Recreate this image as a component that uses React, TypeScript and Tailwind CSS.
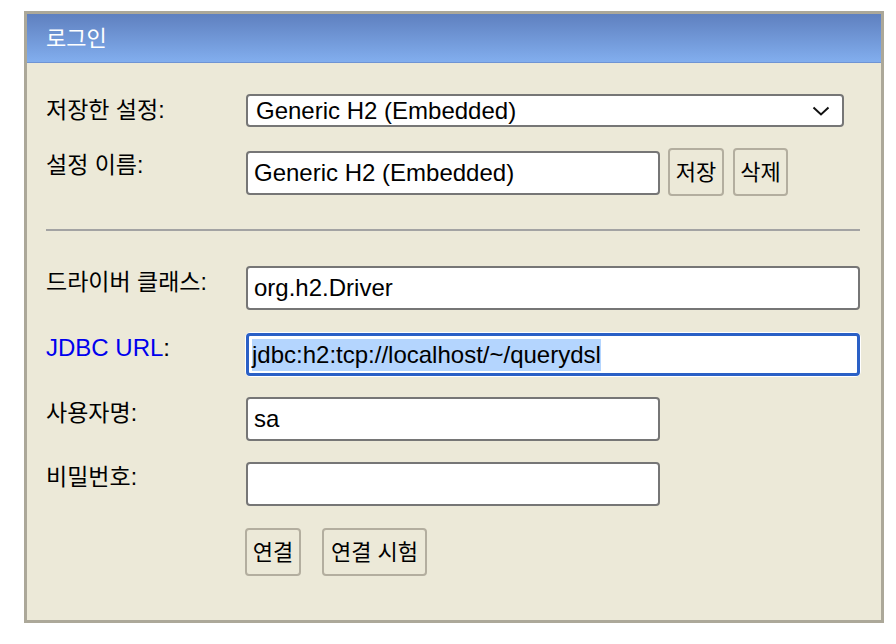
import React from "react";

const font = "font-['Liberation_Sans','Noto_Sans_CJK_KR',sans-serif]";

function Label({ children, pt = "pt-[3px]" }: { children: React.ReactNode; pt?: string }) {
  return (
    <div className={`w-[200px] shrink-0 text-[23px] leading-[28px] text-black ${pt}`}>{children}</div>
  );
}

function TextBox({ value, width }: { value: string; width: string }) {
  return (
    <input
      readOnly
      defaultValue={value}
      className={`${width} h-[44px] rounded-[4px] border-2 border-[#767676] bg-white px-[6px] text-[24px] text-black outline-none ${font}`}
    />
  );
}

function Btn({ children, width }: { children: React.ReactNode; width: string }) {
  return (
    <button
      className={`${width} h-[48px] rounded-[4px] border-2 border-[#b3ae9f] bg-[#ece9d8] text-[22px] text-black ${font}`}
    >
      {children}
    </button>
  );
}

export default function App() {
  return (
    <div className={`min-h-[644px] w-[896px] bg-white pt-[11px] pl-[24px] ${font}`}>
      <div className="w-[860px] border-[3px] border-[#aca899] bg-[#ece9d8]">
        <div className="flex h-[49px] items-center border-b border-[#6f94d4] bg-gradient-to-b from-[#5f80bf] to-[#82aeee] pl-[19px]">
          <span className="text-[22px] text-white">로그인</span>
        </div>

        <div className="pl-[19px] pb-[44px]">
          {/* saved settings */}
          <div className="mt-[31px] flex h-[33px] items-start">
            <Label pt="pt-[2px]">저장한 설정:</Label>
            <div className="flex h-[33px] w-[598px] items-center justify-between rounded-[4px] border-2 border-[#767676] bg-white pl-[8px] pr-[12px] text-[24px] text-black">
              <span>Generic H2 (Embedded)</span>
              <svg width="18" height="12" viewBox="0 0 18 12" fill="none">
                <path d="M1.5 2.5 L9 9.5 L16.5 2.5" stroke="#111" strokeWidth="2" />
              </svg>
            </div>
          </div>

          {/* setting name */}
          <div className="mt-[21px] flex h-[48px] items-start">
            <Label pt="pt-[3px]">설정 이름:</Label>
            <div className="flex items-center">
              <div className="mt-[1px]">
                <TextBox value="Generic H2 (Embedded)" width="w-[414px]" />
              </div>
              <div className="ml-[8px]">
                <Btn width="w-[56px]">저장</Btn>
              </div>
              <div className="ml-[9px]">
                <Btn width="w-[55px]">삭제</Btn>
              </div>
            </div>
          </div>

          <div className="mt-[33px] mr-[21px] h-[2px] bg-[#a3a3a3]" />

          {/* driver class */}
          <div className="mt-[35px] flex h-[44px] items-start">
            <Label pt="pt-[2px]">드라이버 클래스:</Label>
            <TextBox value="org.h2.Driver" width="w-[614px]" />
          </div>

          {/* jdbc url */}
          <div className="mt-[22px] flex h-[43px] items-start">
            <div className="w-[200px] shrink-0 pt-[2px] text-[24px] leading-[28px]">
              <span className="text-[#0000ee]">JDBC URL</span>
              <span className="text-black">:</span>
            </div>
            <div className="-ml-[1px] rounded-[6px] bg-white p-[1px]">
              <div className="flex h-[43px] w-[614px] items-center rounded-[4px] border-[3px] border-[#2a60c6] bg-white pl-[3px] text-[24px] text-black">
                <span className="bg-[#b4d5fe] leading-[32px]">jdbc:h2:tcp://localhost/~/querydsl</span>
              </div>
            </div>
          </div>

          {/* user */}
          <div className="mt-[22px] flex h-[44px] items-start">
            <Label pt="pt-[2px]">사용자명:</Label>
            <TextBox value="sa" width="w-[414px]" />
          </div>

          {/* password */}
          <div className="mt-[21px] flex h-[44px] items-start">
            <Label pt="pt-[1px]">비밀번호:</Label>
            <TextBox value="" width="w-[414px]" />
          </div>

          {/* actions */}
          <div className="mt-[22px] flex h-[48px] items-start pl-[199px]">
            <Btn width="w-[56px]">연결</Btn>
            <div className="ml-[21px]">
              <Btn width="w-[105px]">연결 시험</Btn>
            </div>
          </div>
        </div>
      </div>
    </div>
  );
}
